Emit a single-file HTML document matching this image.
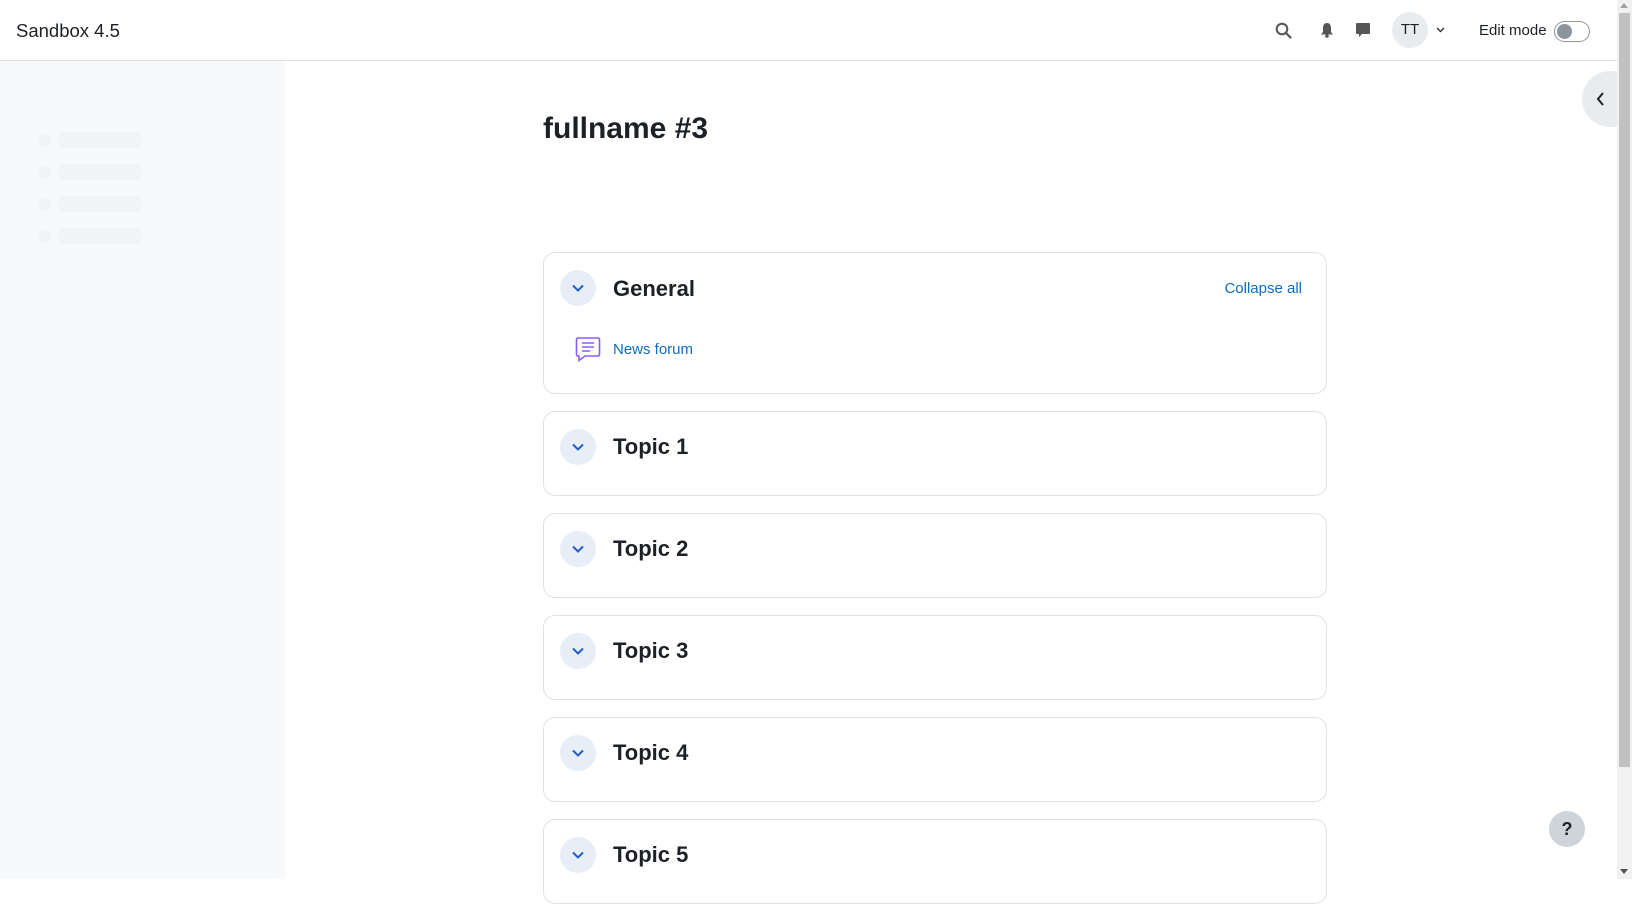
<!DOCTYPE html>
<html><head><meta charset="utf-8"><style>
*{box-sizing:border-box;margin:0;padding:0}
html,body{width:1632px;height:879px;overflow:hidden;background:#fff;font-family:"Liberation Sans",sans-serif;color:#1d2125}
.hdr{position:absolute;left:0;top:0;width:1617px;height:61px;border-bottom:1px solid #dee2e6;background:#fff}
.brand{position:absolute;left:16px;top:20px;font-size:18.5px;color:#1d2125}
.side{position:absolute;left:0;top:61px;width:285px;height:818px;background:#f8f9fa}
.ph{position:absolute;left:39px;width:100px;height:16px;background:#f3f4f6;border-radius:4px}
.phc{position:absolute;left:38px;width:13px;height:13px;border-radius:50%;background:#f3f4f6}
h1{position:absolute;left:543px;top:112px;font-size:30px;font-weight:bold}
.card{position:absolute;left:543px;width:784px;border:1px solid #dee2e6;border-radius:12px;background:#fff}
.chev{position:absolute;left:16px;width:36px;height:36px;border-radius:50%;background:#e7eef8}
.chev svg{position:absolute;left:10px;top:10px}
.ct{position:absolute;left:69px;font-size:22px;font-weight:bold}
.sb{position:absolute;left:1617px;top:0;width:15px;height:879px;background:#f1f1f1}
.thumb{position:absolute;left:2px;top:13px;width:11px;height:754px;background:#c1c1c1}
</style></head><body>
<div class="hdr">
<div class="brand">Sandbox 4.5</div>
<svg style="position:absolute;left:1275px;top:22px" width="17" height="17" viewBox="0 0 17 17"><circle cx="7" cy="7" r="5.3" fill="none" stroke="#555" stroke-width="2"/><path d="M11 11l4.5 4.5" stroke="#555" stroke-width="2.2" stroke-linecap="round"/></svg>
<svg style="position:absolute;left:1320px;top:22px" width="14" height="16" viewBox="0 0 14 16"><path d="M7 1C4 1 3 3.5 3 6v4L1 12.5h12L11 10V6c0-2.5-1-5-4-5z" fill="#555"/><circle cx="7" cy="14" r="1.8" fill="#555"/></svg>
<svg style="position:absolute;left:1355px;top:22px" width="16" height="16" viewBox="0 0 16 16"><path d="M2 1h12a1 1 0 011 1v9a1 1 0 01-1 1H7l-3 3v-3H2a1 1 0 01-1-1V2a1 1 0 011-1z" fill="#555"/></svg>
<div style="position:absolute;left:1392px;top:12px;width:36px;height:36px;border-radius:50%;background:#e9ecef;font-size:15px;text-align:center;line-height:36px">TT</div>
<svg style="position:absolute;left:1436px;top:27px" width="9" height="6" viewBox="0 0 9 6"><path d="M1 1l3.5 3.5L8 1" fill="none" stroke="#333" stroke-width="1.4"/></svg>
<div style="position:absolute;left:1479px;top:22px;font-size:15px">Edit mode</div>
<div style="position:absolute;left:1554px;top:21px;width:36px;height:21px;border:1px solid #8f959e;border-radius:11px"><div style="position:absolute;left:2px;top:2px;width:15px;height:15px;border-radius:50%;background:#8f959e"></div></div>
</div>
<div class="side">
<div class="phc" style="top:73px"></div><div class="ph" style="top:71px;left:58px;width:84px"></div>
<div class="phc" style="top:105px"></div><div class="ph" style="top:103px;left:58px;width:84px"></div>
<div class="phc" style="top:137px"></div><div class="ph" style="top:135px;left:58px;width:84px"></div>
<div class="phc" style="top:169px"></div><div class="ph" style="top:167px;left:58px;width:84px"></div>
</div>
<div style="position:absolute;left:1582px;top:71px;width:56px;height:56px;border-radius:50%;background:#e9ecef"></div>
<svg style="position:absolute;left:1595px;top:91px" width="10" height="16" viewBox="0 0 10 16"><path d="M8 2L3 8l5 6" fill="none" stroke="#1d2125" stroke-width="2"/></svg>
<h1>fullname #3</h1>

<div class="card" style="top:252px;height:142px">
<div class="chev" style="top:17px"><svg width="16" height="16" viewBox="0 0 16 16"><path d="M3 5.5l5 5 5-5" fill="none" stroke="#1f5fbf" stroke-width="2"/></svg></div>
<div class="ct" style="top:23px">General</div>
<div style="position:absolute;right:24px;top:27px;font-size:15px;color:#0f6cbf">Collapse all</div>
<svg style="position:absolute;left:31px;top:83px" width="26" height="26" viewBox="0 0 26 26"><path d="M3 2h20a1.5 1.5 0 011.5 1.5v15A1.5 1.5 0 0123 20H10l-6 4.5V20H3a1.5 1.5 0 01-1.5-1.5v-15A1.5 1.5 0 013 2z" fill="none" stroke="#8b5cf6" stroke-width="1.6"/><path d="M7 7h12M7 11h12M7 15h8" stroke="#8b5cf6" stroke-width="1.6"/></svg>
<div style="position:absolute;left:69px;top:88px;font-size:15px;color:#0f6cbf">News forum</div>
</div>

<div class="card" style="top:411px;height:85px"><div class="chev" style="top:17px"><svg width="16" height="16" viewBox="0 0 16 16"><path d="M3 5.5l5 5 5-5" fill="none" stroke="#1f5fbf" stroke-width="2"/></svg></div><div class="ct" style="top:22px">Topic 1</div></div>
<div class="card" style="top:513px;height:85px"><div class="chev" style="top:17px"><svg width="16" height="16" viewBox="0 0 16 16"><path d="M3 5.5l5 5 5-5" fill="none" stroke="#1f5fbf" stroke-width="2"/></svg></div><div class="ct" style="top:22px">Topic 2</div></div>
<div class="card" style="top:615px;height:85px"><div class="chev" style="top:17px"><svg width="16" height="16" viewBox="0 0 16 16"><path d="M3 5.5l5 5 5-5" fill="none" stroke="#1f5fbf" stroke-width="2"/></svg></div><div class="ct" style="top:22px">Topic 3</div></div>
<div class="card" style="top:717px;height:85px"><div class="chev" style="top:17px"><svg width="16" height="16" viewBox="0 0 16 16"><path d="M3 5.5l5 5 5-5" fill="none" stroke="#1f5fbf" stroke-width="2"/></svg></div><div class="ct" style="top:22px">Topic 4</div></div>
<div class="card" style="top:819px;height:85px"><div class="chev" style="top:17px"><svg width="16" height="16" viewBox="0 0 16 16"><path d="M3 5.5l5 5 5-5" fill="none" stroke="#1f5fbf" stroke-width="2"/></svg></div><div class="ct" style="top:22px">Topic 5</div></div>

<div style="position:absolute;left:1549px;top:811px;width:36px;height:36px;border-radius:50%;background:#ced4da;text-align:center;line-height:36px;font-size:18px;font-weight:bold;color:#1d2125">?</div>
<div class="sb"><div class="thumb"></div>
<svg style="position:absolute;left:3px;top:3px" width="9" height="6"><path d="M0 5h8L4 0z" fill="#a3a3a3"/></svg>
<svg style="position:absolute;left:3px;top:869px" width="9" height="6"><path d="M0 0h8L4 5z" fill="#505050"/></svg></div>
</body></html>
